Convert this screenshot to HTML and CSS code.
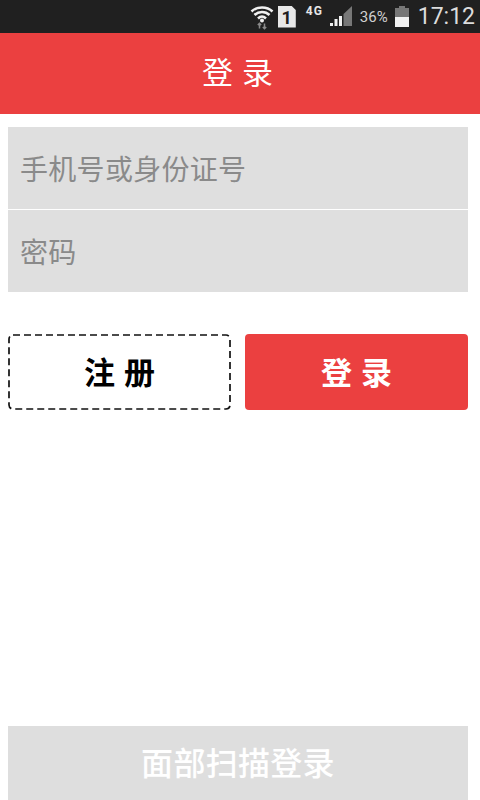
FILE: index.html
```html
<!DOCTYPE html>
<html lang="zh">
<head>
<meta charset="utf-8">
<title>登录</title>
<link rel="stylesheet" href="styles.css">
</head>
<body>
<div class="app">
  <div class="status">
    <svg class="wifi" width="24" height="26" viewBox="0 0 24 26">
      <path d="M1.500 7.500C7 2 17 2 22.500 7.500" class="arc"/>
      <path d="M4.500 11C8.500 7 15.500 7 19.500 11" class="arc"/>
      <path d="M8 14.500C10.500 12 13.500 12 16 14.500" class="arc"/>
      <circle cx="12" cy="16.500" r="2" fill="#f0f0f0"/>
      <path d="M9.500 19.500v5M7.800 21l1.700-1.700 1.700 1.700M14.500 24.500v-5M12.800 23l1.700 1.700 1.700-1.700" fill="none" stroke="#8a8a8a" stroke-width="1.500"/>
    </svg>
    <div class="sim">1</div>
    <span class="net">4G</span>
    <svg class="signal" width="24" height="22" viewBox="0 0 24 22">
      <path d="M1 20h3v-3H1zM5.500 20h3v-7h-3zM10 20h3V10h-3z" fill="#f2f2f2"/>
      <path d="M14.500 20h8.500V0l-8.500 8z" fill="#777"/>
    </svg>
    <span class="pct">36%</span>
    <svg class="batt" width="16" height="22" viewBox="0 0 16 22">
      <path d="M5 0h6v2h4v9H1V2h4z" fill="#777"/>
      <path d="M1 11h14v10H1z" fill="#f2f2f2"/>
    </svg>
    <span class="time">17:12</span>
  </div>
  <header class="title"><span class="title-text">登 录</span></header>
  <main class="content">
    <div class="form">
      <div class="field">手机号或身份证号</div>
      <div class="field">密码</div>
    </div>
    <div class="actions">
      <button class="btn register">
        <svg class="dash" width="223" height="76" viewBox="0 0 223 76">
          <rect x="1" y="1" width="221" height="74" rx="4"/>
        </svg>
        <span class="btn-text">注 册</span>
      </button>
      <button class="btn login"><span class="btn-text">登 录</span></button>
    </div>
    <button class="face"><span class="face-text">面部扫描登录</span></button>
  </main>
</div>
</body>
</html>
```
FILE: styles.css
```css
* { box-sizing: border-box; }
html, body { margin: 0; padding: 0; height: 100%; background: #fff; }
body { font-family: "Noto Sans CJK SC", "Liberation Sans", sans-serif; }
.app { width: 480px; height: 800px; display: flex; flex-direction: column; overflow: hidden; }
.status {
  height: 33px; background: #202020; color: #e6e6e6;
  display: flex; align-items: center; justify-content: flex-end;
  padding-right: 5px; font-family: "Roboto", "Liberation Sans", sans-serif;
  flex: none;
}
.arc { fill: none; stroke: #f0f0f0; stroke-width: 2.500; }
.wifi { margin-right: 4px; }
.sim {
  width: 18px; height: 22px; background: #e8e8e8; color: #202020;
  font-size: 18px; font-weight: 700; line-height: 23px; text-align: center;
  clip-path: polygon(0 0, 75% 0, 100% 20%, 100% 100%, 0 100%);
  margin-right: 10px;
}
.net { font-size: 12px; font-weight: 700; letter-spacing: 1px; align-self: flex-start; margin-top: 4px; margin-right: 6px; }
.signal { margin-right: 7px; margin-top: 1px; }
.pct { font-size: 15px; color: #d0d0d0; margin-right: 6px; }
.batt { margin-right: 8px; }
.time { font-size: 23px; color: #dcdcdc; }
.title {
  height: 81px; background: #eb4040; color: #fff; flex: none;
  display: flex; align-items: center; justify-content: center;
  font-size: 31px; letter-spacing: 1px; padding-right: 4px;
}
.title-text { position: relative; top: -3px; }
.content { flex: 1; display: flex; flex-direction: column; padding: 13px 12px 0 8px; }
.form { display: flex; flex-direction: column; gap: 1px; }
.field {
  height: 82px; background: #dfdfdf; color: #8a8a8a;
  display: flex; align-items: center; padding-left: 12px; font-size: 28px; letter-spacing: 0.3px;
}
.actions { display: grid; grid-template-columns: 1fr 1fr; gap: 14px; margin-top: 42px; }
.btn {
  position: relative; height: 76px; border-radius: 4px; border: 0; font-family: inherit;
  font-size: 31px; font-weight: 700; padding: 0; word-spacing: 2px;
}
.btn-text { position: relative; top: -2px; }
.register { background: #fff; color: #000; }
.dash { position: absolute; left: 0; top: 0; }
.dash rect { fill: none; stroke: #111; stroke-width: 1.700; stroke-dasharray: 7 4; }
.login { background: #eb4040; color: #fff; }
.face {
  margin-top: auto; height: 74px; background: #dedede; color: #fff;
  border: 0; font-family: inherit; font-size: 32px; font-weight: 500; padding: 0; letter-spacing: 0.3px;
}
.face-text { position: relative; top: -2px; }
```
